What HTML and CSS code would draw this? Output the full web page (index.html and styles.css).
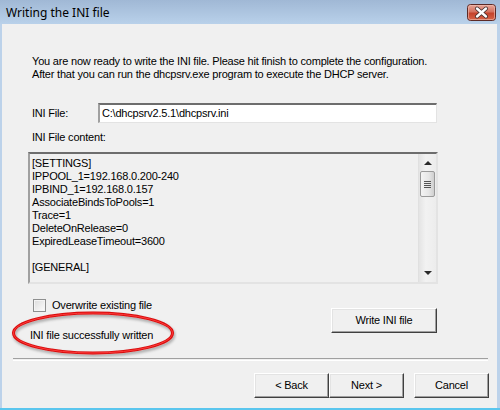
FILE: index.html
```html
<!DOCTYPE html>
<html>
<head>
<meta charset="utf-8">
<link rel="stylesheet" href="styles.css">
</head>
<body>
<div class="window">
  <div class="titlebar">
    <span class="title">Writing the INI file</span>
    <span class="close">
      <svg width="29" height="17" viewBox="0 0 29 17">
        <defs>
          <linearGradient id="cg" x1="0" y1="0" x2="0" y2="1">
            <stop offset="0" stop-color="#e8a89a"/>
            <stop offset="0.45" stop-color="#d47260"/>
            <stop offset="0.55" stop-color="#c4432c"/>
            <stop offset="1" stop-color="#d8664a"/>
          </linearGradient>
        </defs>
        <rect x="0.5" y="0.5" width="28" height="16" rx="3" fill="url(#cg)" stroke="#5c2a26"/>
        <rect x="1.5" y="1.5" width="26" height="14" rx="2" fill="none" stroke="#f0c0b4" stroke-opacity="0.6"/>
        <path d="M10 4.5 L19 12.5 M19 4.5 L10 12.5" stroke="#3a2a2a" stroke-width="4" stroke-linecap="round"/>
        <path d="M10 4.5 L19 12.5 M19 4.5 L10 12.5" stroke="#ffffff" stroke-width="2.4" stroke-linecap="round"/>
      </svg>
    </span>
  </div>
  <div class="client">
    <div class="page">
      <p class="intro">You are now ready to write the INI file. Please hit finish to complete the configuration.<br>After that you can run the dhcpsrv.exe program to execute the DHCP server.</p>
      <div class="file-row">
        <span class="file-label">INI File:</span>
        <div class="input">C:\dhcpsrv2.5.1\dhcpsrv.ini</div>
      </div>
      <div class="content-label">INI File content:</div>
      <div class="textarea">
        <div class="ta-text">[SETTINGS]<br>IPPOOL_1=192.168.0.200-240<br>IPBIND_1=192.168.0.157<br>AssociateBindsToPools=1<br>Trace=1<br>DeleteOnRelease=0<br>ExpiredLeaseTimeout=3600<br><br>[GENERAL]</div>
        <div class="scrollbar">
          <span class="arrow up"></span>
          <span class="thumb"><span class="grip"></span></span>
          <span class="track"></span>
          <span class="arrow down"></span>
        </div>
      </div>
      <div class="bottom">
        <div class="left">
          <div class="check"><span class="box"></span><span>Overwrite existing file</span></div>
          <div class="status">INI file successfully written
            <svg class="ellipse" width="166" height="48" viewBox="0 0 166 48">
              <defs>
                <filter id="sh" x="-10%" y="-20%" width="120%" height="150%">
                  <feGaussianBlur in="SourceAlpha" stdDeviation="1.5"/>
                  <feOffset dx="1" dy="2" result="b"/>
                  <feComponentTransfer><feFuncA type="linear" slope="0.35"/></feComponentTransfer>
                  <feMerge><feMergeNode/><feMergeNode in="SourceGraphic"/></feMerge>
                </filter>
              </defs>
              <ellipse cx="82" cy="22" rx="79.5" ry="20" fill="none" stroke="#d80e0e" stroke-width="3" filter="url(#sh)"/>
              <ellipse cx="82" cy="22" rx="79.5" ry="20" fill="none" stroke="#ff3a3a" stroke-width="1"/>
            </svg>
          </div>
        </div>
        <div class="btn write">Write INI file</div>
      </div>
    </div>
    <div class="sep"></div>
    <div class="nav">
      <div class="btn">&lt; Back</div>
      <div class="btn">Next &gt;</div>
      <div class="btn cancel">Cancel</div>
    </div>
  </div>
</div>
</body>
</html>
```

FILE: styles.css
```css
html, body {
  margin: 0;
  padding: 0;
}
body {
  width: 500px;
  height: 410px;
  overflow: hidden;
  font-family: "Liberation Sans", Arial, sans-serif;
  font-size: 11px;
  letter-spacing: -0.2px;
  color: #000;
  background: #f0f0f0;
}
.window {
  width: 500px;
  height: 410px;
  box-sizing: border-box;
  display: flex;
  flex-direction: column;
  background: #f0f0f0;
  border-bottom: 2px solid #5ac6ee;
}
.titlebar {
  height: 24px;
  flex: none;
  background: linear-gradient(#a0b8d5, #b9d1ea);
  display: flex;
  align-items: center;
  justify-content: space-between;
  padding: 0 4px 0 6px;
}
.title {
  font-family: "Noto Sans", "DejaVu Sans", sans-serif;
  font-size: 12px;
  letter-spacing: 0;
  color: #000;
  margin-top: 1px;
}
.close {
  display: flex;
  margin-top: 1px;
}
.client {
  flex: 1;
  display: flex;
  flex-direction: column;
  border-left: 2px solid #bcd2ea;
  border-right: 3px solid #bcd2ea;
  line-height: 13px;
}
.page {
  padding: 31px 0 0 26px;
  width: 410px;
}
.intro {
  margin: 0 0 0 4px;
  line-height: 13px;
  white-space: nowrap;
}
.file-row {
  margin-top: 22px;
  display: flex;
  align-items: center;
}
.file-label {
  margin-left: 4px;
  width: 66px;
}
.input {
  box-sizing: border-box;
  width: 339px;
  height: 20px;
  background: #fff;
  border-top: 2px solid #6d6d6d;
  border-left: 2px solid #a0a0a0;
  border-right: 1px solid #e3e3e3;
  border-bottom: 1px solid #e3e3e3;
  padding: 2px 0 0 2px;
  white-space: nowrap;
}
.content-label {
  margin: 8px 0 0 4px;
}
.textarea {
  margin-top: 8px;
  box-sizing: border-box;
  width: 410px;
  height: 132px;
  border-top: 2px solid #6d6d6d;
  border-left: 2px solid #a0a0a0;
  border-right: 2px solid #e3e3e3;
  border-bottom: 2px solid #e3e3e3;
  background: #f0f0f0;
  display: flex;
}
.ta-text {
  flex: 1;
  padding: 3px 0 0 2px;
  white-space: nowrap;
}
.scrollbar {
  width: 17px;
  display: flex;
  flex-direction: column;
  align-items: center;
  background: linear-gradient(90deg, #e4e4e4, #f2f2f2 40%, #ececec);
  border-left: 1px solid #e0e0e0;
}
.arrow {
  width: 0;
  height: 0;
  border-left: 4px solid transparent;
  border-right: 4px solid transparent;
  margin: 7px 0 6px;
}
.arrow.up {
  border-bottom: 4px solid #2a2a2a;
}
.arrow.down {
  border-top: 4px solid #2a2a2a;
  margin: 6px 0 7px;
}
.thumb {
  box-sizing: border-box;
  width: 15px;
  height: 26px;
  border: 1px solid #9a9a9a;
  border-radius: 2px;
  background: linear-gradient(90deg, #f4f4f4, #e6e6e6 60%, #cfcfcf);
  display: flex;
  align-items: center;
  justify-content: center;
}
.grip {
  width: 7px;
  height: 7px;
  background: repeating-linear-gradient(#555 0 1px, transparent 1px 2px);
}
.track {
  flex: 1;
}
.bottom {
  margin-top: 14px;
  display: flex;
  justify-content: space-between;
  width: 409px;
}
.check {
  display: flex;
  align-items: center;
  margin-left: 5px;
  height: 14px;
}
.box {
  box-sizing: border-box;
  width: 13px;
  height: 13px;
  border: 1px solid #8e8f8f;
  background: linear-gradient(135deg, #dcdcdc, #fdfdfd);
  box-shadow: inset 0 0 0 1px #f4f4f4;
  margin-right: 6px;
}
.status {
  position: relative;
  margin: 17px 0 0 2px;
  white-space: nowrap;
}
.ellipse {
  position: absolute;
  left: -19px;
  top: -18px;
}
.btn {
  box-sizing: border-box;
  height: 25px;
  background: #f0f0f0;
  border-top: 1px solid #fff;
  border-left: 1px solid #fff;
  border-right: 1px solid #404040;
  border-bottom: 1px solid #404040;
  box-shadow: inset -1px -1px 0 #a0a0a0, inset 1px 1px 0 #e3e3e3;
  display: flex;
  align-items: center;
  justify-content: center;
  white-space: nowrap;
}
.write {
  width: 106px;
  margin-top: 10px;
}
.sep {
  margin: 16px 9px 0 11px;
  height: 1px;
  border-top: 1px solid #a0a0a0;
  border-bottom: 1px solid #fff;
}
.nav {
  margin-top: 12px;
  display: flex;
  justify-content: flex-end;
  padding-right: 8px;
}
.nav .btn {
  width: 75px;
}
.nav .cancel {
  margin-left: 10px;
}
```
